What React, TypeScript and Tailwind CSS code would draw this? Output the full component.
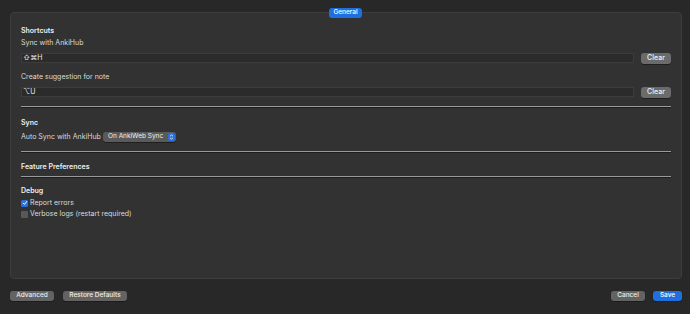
import React from "react";

const font = { fontFamily: "Inter, 'Liberation Sans', sans-serif" };

function Sep({ mt }: { mt: string }) {
  return (
    <div className={`${mt} flex flex-col`}>
      <div className="h-px bg-[#9a9a9a]" />
      <div className="h-px bg-[#1e1e1e]" />
    </div>
  );
}

function Title({ children, mt }: { children: React.ReactNode; mt: string }) {
  return (
    <div className={`${mt} h-[10px] flex items-center text-[7px] font-semibold text-[#eeeeee]`}>{children}</div>
  );
}

function Label({ children, mt }: { children: React.ReactNode; mt: string }) {
  return <div className={`${mt} h-[10px] flex items-center text-[7px] text-[#dcdcdc]`}>{children}</div>;
}

function ShortcutRow({ value, mt }: { value: string; mt: string }) {
  return (
    <div className={`${mt} h-[11px] flex items-start gap-[7px]`}>
      <div className="flex-1 h-[10px] bg-[#2b2b2b] border border-[#3c3c3c] flex items-center pl-[1px] text-[7px] text-[#e8e8e8]">
        {value}
      </div>
      <button className="w-[30px] h-[11px] rounded-[3px] bg-[#6b6b6b] shadow-[0_1px_0_#1f1f1f] text-[7px] font-medium text-[#f2f2f2] flex items-center justify-center">
        Clear
      </button>
    </div>
  );
}

function Btn({ children, w, blue }: { children: React.ReactNode; w: string; blue?: boolean }) {
  return (
    <button
      className={`${w} h-[10px] rounded-[3px] text-[6.5px] font-medium flex items-center justify-center shadow-[0_1px_0_#1c1c1c] ${
        blue ? "bg-[#1f6fde] text-white" : "bg-[#636363] text-[#efefef]"
      }`}
    >
      {children}
    </button>
  );
}

export default function App() {
  return (
    <div className="w-[690px] h-[314px] bg-[#282828] relative overflow-hidden" style={font}>
      <div className="ml-[10px] mr-[8px] mt-[12px] h-[267px] bg-[#323232] border border-[#3d3d3d] rounded-[4px] pt-[13px] px-[10px] flex flex-col">
        <Title mt="mt-0">Shortcuts</Title>
        <Label mt="mt-[2px]">Sync with AnkiHub</Label>
        <ShortcutRow mt="mt-[5px]" value="⇧⌘H" />
        <Label mt="mt-[8px]">Create suggestion for note</Label>
        <ShortcutRow mt="mt-[5px]" value="⌥U" />
        <Sep mt="mt-[8px]" />
        <Title mt="mt-[10px]">Sync</Title>
        <div className="mt-[4px] h-[10px] flex items-center">
          <span className="text-[7px] text-[#dcdcdc] w-[82px]">Auto Sync with AnkiHub</span>
          <div className="w-[73px] h-[10px] rounded-[3px] bg-[#5a5a5a] shadow-[0_1px_0_#1f1f1f] flex items-center justify-between pl-[5px] pr-[1px]">
            <span className="text-[6.5px] text-[#efefef]">On AnkiWeb Sync</span>
            <div className="w-[7px] h-[8px] rounded-[2px] bg-[#2a6fe0] flex items-center justify-center">
              <svg width="5" height="6" viewBox="0 0 5 6" fill="none" stroke="white" strokeWidth="0.8">
                <path d="M1 2.2 L2.5 0.9 L4 2.2" />
                <path d="M1 3.8 L2.5 5.1 L4 3.8" />
              </svg>
            </div>
          </div>
        </div>
        <Sep mt="mt-[9px]" />
        <Title mt="mt-[9px]">Feature Preferences</Title>
        <Sep mt="mt-[4px]" />
        <Title mt="mt-[8px]">Debug</Title>
        <div className="mt-[2px] h-[10px] flex items-center gap-[2px]">
          <div className="w-[7px] h-[7px] rounded-[1.5px] bg-[#2a6fe0] flex items-center justify-center">
            <svg width="6" height="6" viewBox="0 0 6 6" fill="none" stroke="white" strokeWidth="1" strokeLinecap="round" strokeLinejoin="round">
              <path d="M1.2 3.1 L2.5 4.4 L4.9 1.4" />
            </svg>
          </div>
          <span className="text-[7px] text-[#dcdcdc]">Report errors</span>
        </div>
        <div className="mt-[1px] h-[10px] flex items-center gap-[2px]">
          <div className="w-[7px] h-[7px] rounded-[1px] bg-[#585858]" />
          <span className="text-[7px] text-[#dcdcdc]">Verbose logs (restart required)</span>
        </div>
      </div>

      <div className="absolute top-[8px] left-[329px] w-[33px] h-[10px] rounded-[3px] bg-[#1f6fde] flex items-center justify-center text-[6.5px] font-medium text-white">
        General
      </div>

      <div className="mt-[12px] ml-[10px] mr-[8px] flex items-center">
        <div className="flex gap-[9px]">
          <Btn w="w-[44px]">Advanced</Btn>
          <Btn w="w-[64px]">Restore Defaults</Btn>
        </div>
        <div className="flex-1" />
        <div className="flex gap-[8px]">
          <Btn w="w-[34px]">Cancel</Btn>
          <Btn w="w-[29px]" blue>
            Save
          </Btn>
        </div>
      </div>
    </div>
  );
}
